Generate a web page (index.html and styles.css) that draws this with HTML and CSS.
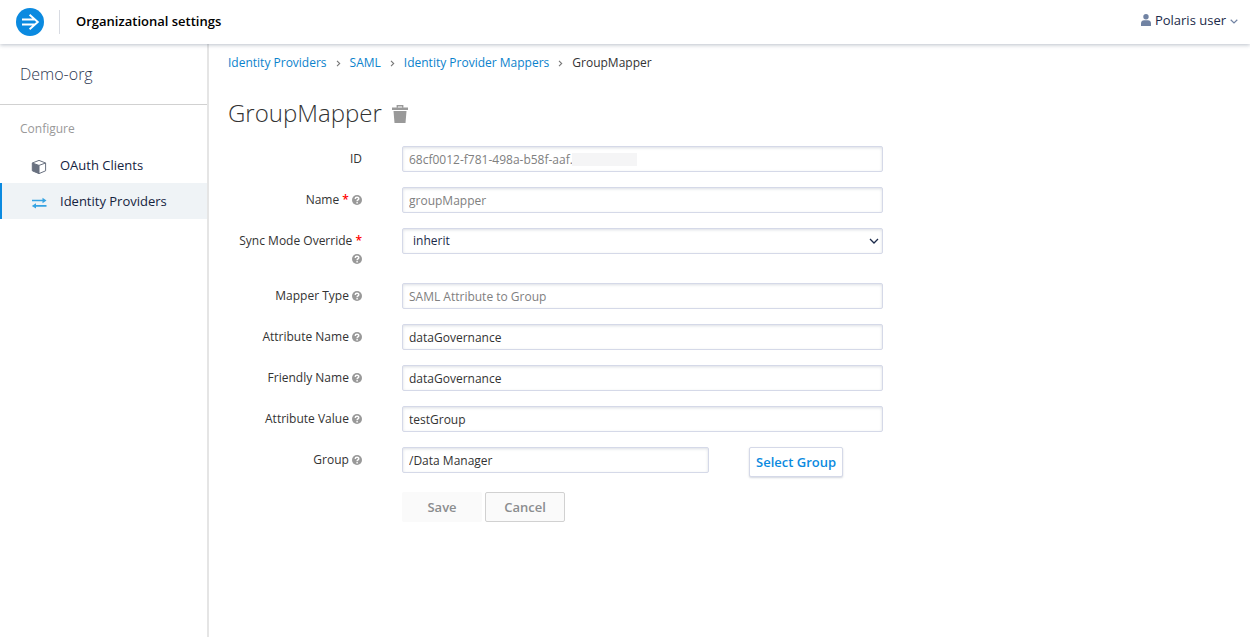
FILE: index.html
```html
<!DOCTYPE html>
<html lang="en">
<head>
<meta charset="utf-8">
<title>Organizational settings</title>
<link rel="stylesheet" href="styles.css">
</head>
<body>
<svg class="symbols" aria-hidden="true">
  <symbol id="help" viewBox="0 0 10 10">
    <circle cx="5" cy="5" r="5" fill="#999"/>
    <path d="M3.2 3.9C3.2 1.7 6.8 1.7 6.8 3.8C6.8 5 5.1 4.9 5.1 6.2M5.1 7.1V8.4" fill="none" stroke="#fff" stroke-width="1.4"/>
  </symbol>
  <symbol id="sep" viewBox="0 0 5 7">
    <path d="M1 .8L3.7 3.5L1 6.2" fill="none" stroke="#777" stroke-width="1.1"/>
  </symbol>
</svg>
<header class="topbar">
  <a class="logo" href="#" aria-label="Home">
    <svg viewBox="0 0 28 28" width="28" height="28"><circle cx="14" cy="14" r="14" fill="#0b8ae0"/><path d="M6 11.5H19M6 16.5H19M13.6 6.7L21.8 14L13.6 21.3" fill="none" stroke="#fff" stroke-width="1.9"/></svg>
  </a>
  <h1 class="app-title">Organizational settings</h1>
  <button class="user" type="button">
    <svg viewBox="0 0 10 12" width="10" height="12"><circle cx="5" cy="2.8" r="2.7" fill="#7183a3"/><path d="M0 12V9.5C0 7.3 1.5 6.2 3 6.2H7C8.5 6.2 10 7.3 10 9.5V12Z" fill="#7183a3"/></svg>
    <span>Polaris user</span>
    <svg viewBox="0 0 8 7" width="8" height="7"><path d="M.7 2.8L4 6L7.3 2.8" fill="none" stroke="#7183a3" stroke-width="1.2"/></svg>
  </button>
</header>
<div class="shell">
  <nav class="sidebar">
    <div class="org">Demo-org</div>
    <div class="group-title">Configure</div>
    <a class="nav-item" href="#">
      <svg viewBox="0 0 16 16" width="16" height="16"><path d="M1.3 4L8 6.4V14.8L1.3 11.8Z" fill="#697180"/><path d="M1.3 4L8 1.4L14.6 4V11.8L8 14.6L1.3 11.8ZM1.3 4L8 6.4L14.6 4M8 6.4V14.6" fill="none" stroke="#697180" stroke-width="1" stroke-linejoin="round"/></svg>
      <span>OAuth Clients</span>
    </a>
    <a class="nav-item active" href="#">
      <svg viewBox="0 0 16 16" width="16" height="16"><path d="M1 5.5H12M4 10.9H15.5" stroke="#36a3e2" stroke-width="1.7"/><path d="M11.5 2.8L15.5 5.5L11.5 8.2ZM5 8.2L.8 10.9L5 13.6Z" fill="#36a3e2"/></svg>
      <span>Identity Providers</span>
    </a>
  </nav>
  <main class="content">
    <nav class="crumbs" aria-label="Breadcrumb">
      <a href="#">Identity Providers</a><svg><use href="#sep"/></svg>
      <a href="#">SAML</a><svg><use href="#sep"/></svg>
      <a href="#">Identity Provider Mappers</a><svg><use href="#sep"/></svg>
      <span>GroupMapper</span>
    </nav>
    <div class="heading">
      <h2>GroupMapper</h2>
      <button class="trash" type="button" aria-label="Delete mapper">
        <svg viewBox="0 0 16 18" width="16" height="18"><path d="M5.3 2.7V.7H10.7V2.7" fill="none" stroke="#999" stroke-width="1.4"/><path d="M0 2.5H16V5H0ZM1.5 6H14.5L13.5 18H2.5Z" fill="#999"/></svg>
      </button>
    </div>
    <form class="form">
      <div class="row">
        <label for="id">ID</label>
        <div class="control"><input id="id" class="muted" type="text" value="68cf0012-f781-498a-b58f-aaf." readonly><span class="redacted"></span></div>
      </div>
      <div class="row">
        <label for="name">Name <b class="req">*</b> <svg class="help"><use href="#help"/></svg></label>
        <div class="control"><input id="name" class="muted" type="text" value="groupMapper" readonly></div>
      </div>
      <div class="row">
        <label for="sync">Sync Mode Override <b class="req">*</b> <svg class="help"><use href="#help"/></svg></label>
        <div class="control">
          <select id="sync"><option>inherit</option></select>
          <svg class="caret" viewBox="0 0 10 6"><path d="M1 1L5 5L9 1" fill="none" stroke="#1b2a4a" stroke-width="1.3"/></svg>
        </div>
      </div>
      <div class="row">
        <label for="type">Mapper Type <svg class="help"><use href="#help"/></svg></label>
        <div class="control"><input id="type" class="muted" type="text" value="SAML Attribute to Group" readonly></div>
      </div>
      <div class="row">
        <label for="attr">Attribute Name <svg class="help"><use href="#help"/></svg></label>
        <div class="control"><input id="attr" type="text" value="dataGovernance"></div>
      </div>
      <div class="row">
        <label for="friendly">Friendly Name <svg class="help"><use href="#help"/></svg></label>
        <div class="control"><input id="friendly" type="text" value="dataGovernance"></div>
      </div>
      <div class="row">
        <label for="value">Attribute Value <svg class="help"><use href="#help"/></svg></label>
        <div class="control"><input id="value" type="text" value="testGroup"></div>
      </div>
      <div class="row">
        <label for="group">Group <svg class="help"><use href="#help"/></svg></label>
        <div class="control split"><input id="group" type="text" value="/Data Manager"><button class="btn select-group" type="button">Select Group</button></div>
      </div>
      <div class="row">
        <div class="control actions"><button class="btn save" type="button">Save</button><button class="btn cancel" type="button">Cancel</button></div>
      </div>
    </form>
  </main>
</div>
</body>
</html>
```
FILE: styles.css
```css
* { box-sizing: border-box; }
body {
  margin: 0;
  min-height: 100vh;
  display: flex;
  flex-direction: column;
  background: #fff;
  color: #333;
  font: 12px/18px "Open Sans", "Noto Sans", sans-serif;
}
button, input, select { font: inherit; }
a { text-decoration: none; }
svg { flex: none; }
.symbols { position: absolute; width: 0; height: 0; }

.topbar {
  position: relative;
  display: flex;
  align-items: center;
  height: 44px;
  padding: 0 12px 0 16px;
  background: #fff;
  box-shadow: 0 1px 4px rgba(30, 50, 80, .3);
}
.logo { display: flex; padding-right: 15px; }
.app-title {
  margin: 0;
  padding: 0 0 2px 16px;
  border-left: 1px solid #d8dbe2;
  color: #000;
  font-size: 13px;
  font-weight: 600;
  line-height: 22px;
}
.user {
  display: flex;
  align-items: center;
  gap: 4px;
  margin-left: auto;
  padding: 0 0 4px;
  border: 0;
  background: none;
  color: #1b2a4a;
  font-size: 13px;
}

.shell { flex: 1; display: flex; padding-bottom: 3px; }
.sidebar {
  flex: none;
  width: 209px;
  border-right: 2px solid #e5e5e5;
}
.org {
  height: 61px;
  padding: 18px 20px;
  border-bottom: 1px solid #d1d1d1;
  color: #2b3650;
  font-size: 16px;
  line-height: 24px;
  font-weight: 300;
}
.group-title { padding: 15px 20px 9px; color: #999; }
.nav-item {
  display: flex;
  align-items: center;
  gap: 13px;
  height: 36px;
  padding-left: 29px;
  border-left: 2px solid transparent;
  color: #15233f;
  font-size: 13px;
}
.nav-item svg { margin-top: 3px; }
.nav-item.active { background: #eff3f6; border-left-color: #0b8ae0; }

.content { flex: 1; min-width: 0; padding: 10px 19px; }
.crumbs { display: flex; align-items: center; }
.crumbs a { color: #0b82cc; }
.crumbs svg { width: 5px; height: 7px; margin: 0 9px; }
.heading {
  display: flex;
  align-items: center;
  gap: 10px;
  margin: 23px 0 15px;
}
.heading h2 { margin: 0; font-size: 24px; font-weight: 300; line-height: 36px; }
.trash { display: flex; padding: 2px 0 0; border: 0; background: none; }

.form { display: grid; gap: 15px; }
.row {
  display: grid;
  grid-template-columns: 134px minmax(0, 481px);
  column-gap: 40px;
  align-items: start;
}
.row label { padding-top: 4px; text-align: right; }
.req { color: #f00; font-weight: 600; }
.help { width: 10px; height: 10px; vertical-align: -1px; }
.control { position: relative; grid-column: 2; }
.row label + .control { min-height: 26px; }
.control input, .control select {
  display: block;
  width: 100%;
  height: 26px;
  padding: 0 6px;
  border: 1px solid #d5d9e8;
  border-radius: 2px;
  background: #fff;
  box-shadow: inset 0 1px 3px rgba(30, 50, 90, .16);
  color: #333;
}
.control .muted { color: #808080; }
.control select { appearance: none; padding: 0 10px; color: #1b2a4a; }
.caret { position: absolute; right: 4px; top: 10px; width: 10px; height: 6px; pointer-events: none; }
.redacted {
  position: absolute;
  left: 170px;
  top: 7px;
  width: 65px;
  height: 13px;
  background: #f5f5f6;
}
.split { display: flex; align-items: start; gap: 40px; }
.split input { width: 307px; }
.actions { display: flex; gap: 3px; }
.btn {
  height: 30px;
  padding: 0 6px;
  border: 1px solid #d5d9e8;
  border-radius: 2px;
  background: #fff;
  font-size: 13px;
  font-weight: 600;
}
.select-group { color: #0b8ae0; box-shadow: 0 1px 2px rgba(30, 50, 90, .2); }
.save, .cancel { width: 80px; background: #fafafa; color: #8b8d8f; }
.save { border-color: #fafafa; }
.cancel { border-color: #d1d1d1; }
```
